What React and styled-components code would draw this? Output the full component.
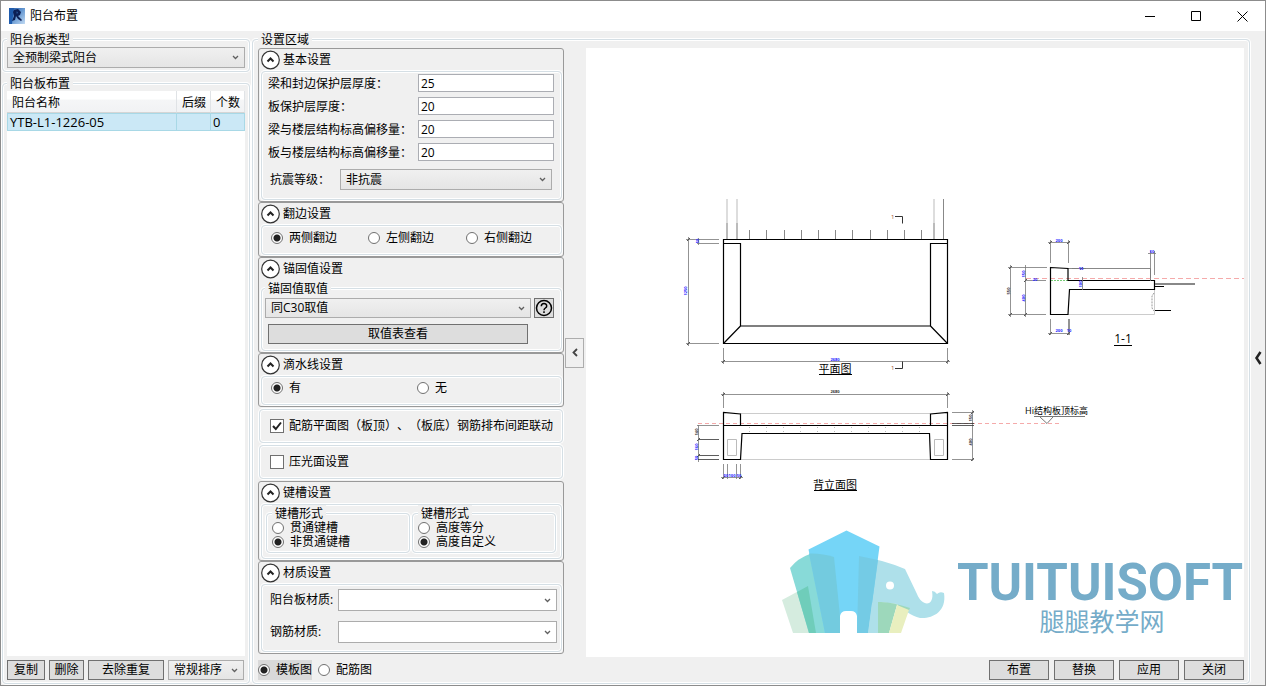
import React, { useState } from "react";

import styled, { createGlobalStyle, css } from "styled-components";

const GlobalStyle = createGlobalStyle`
    * {
        box-sizing: border-box;
    }
    body {
        margin: 0;
        background: #f0f0f0;
        text-spacing-trim: space-all;
    }
    body, button, input, select {
        font-family: "Open Sans", "Noto Sans CJK SC", sans-serif;
        font-size: 12px;
        line-height: 16px;
        color: #000;
    }
`;

const Window = styled.div`
    display: flex;
    flex-direction: column;
    min-height: 100vh;
    border: 1px solid #8c8c8c;
    background: #f0f0f0;
`;

const TitleBar = styled.header`
    display: flex;
    align-items: center;
    height: 30px;
    padding-left: 8px;
    background: #fff;
`;

const Title = styled.h1`
    flex: 1;
    margin: 0 0 0 5px;
    font-size: 12px;
    font-weight: normal;
`;

const WindowButton = styled.button`
    display: flex;
    align-items: center;
    justify-content: center;
    width: 46px;
    height: 30px;
    padding: 0;
    border: 0;
    background: none;
`;

const Body = styled.main`
    flex: 1;
    display: flex;
    padding: 0 0 1px 1px;
`;

const LeftColumn = styled.div`
    display: flex;
    flex-direction: column;
    gap: 3px;
    width: 248px;
    margin-right: 2px;
`;

const Group = styled.fieldset`
    display: flex;
    flex-direction: column;
    min-width: 0;
    margin: 0;
    padding: 0 4px 3px;
    border: 1px solid #d5dfe5;
    border-radius: 4px;
    box-shadow: inset 0 0 0 1px #fff, 0 0 0 1px #fff;
    ${({ $grow }) => $grow && css`flex: 1;`}
`;

const SettingsGroup = styled(Group)`
    flex: 1;
    padding: 0 5px 3px;
`;

const Legend = styled.legend`
    height: 16px;
    margin-left: 0;
    padding: 0 3px;
    background: #f0f0f0;
    line-height: 18px;
`;

const SelectBox = styled.span`
    display: grid;
    align-items: center;
    width: ${({ $width }) => $width || "100%"};
    height: ${({ $height }) => $height || 21}px;
    > * {
        grid-area: 1 / 1;
    }
    > svg {
        justify-self: end;
        margin-right: 5px;
        pointer-events: none;
    }
`;

const Select = styled.select`
    appearance: none;
    width: 100%;
    height: 100%;
    padding: 0 18px 0 5px;
    border: 1px solid #acacac;
    border-radius: 0;
    background: ${({ $plain }) => ($plain ? "#fff" : "linear-gradient(#f0f0f0, #e5e5e5)")};
`;

const Button = styled.button`
    height: 20px;
    padding: 0;
    border: 1px solid #707070;
    background: #ddd;
    line-height: 18px;
    width: ${({ $width }) => $width}px;
`;

const ListArea = styled.div`
    flex: 1;
    margin-bottom: 4px;
    background: #fff;
`;

const Table = styled.table`
    width: 100%;
    table-layout: fixed;
    border-collapse: separate;
    border-spacing: 0;
    th {
        height: 22px;
        padding: 2px 0 0 5px;
        border-right: 1px solid #e0e3e6;
        border-bottom: 1px solid #d5d5d5;
        background: linear-gradient(#fff 40%, #f5f6f7 41%, #f1f2f4);
        font-weight: normal;
        text-align: left;
    }
    td {
        height: 18px;
        padding: 0 0 0 2px;
        border: 1px solid #a8d8e6;
        border-left-width: 0;
        background: #cbe8f6;
        font-size: 13px;
        line-height: 16px;
    }
    td:first-child {
        border-left-width: 1px;
    }
`;

const ListButtons = styled.div`
    display: flex;
    gap: 4px;
`;

const SettingsRow = styled.div`
    flex: 1;
    display: flex;
    align-items: stretch;
    padding-top: 1px;
`;

const Panels = styled.div`
    width: 306px;
`;

const Section = styled.section`
    padding: 0 1px 1px 2px;
    border: 1px solid #999;
    border-radius: 3px;
    ${({ $spaced }) => $spaced && css`margin-top: 2px;`}
`;

const SectionHead = styled.button`
    display: flex;
    align-items: center;
    gap: 3px;
    width: 100%;
    height: 22px;
    padding: 0;
    border: 0;
    background: none;
    text-align: left;
`;

const Inner = styled(Group)`
    padding: ${({ $pad }) => $pad};
`;

const FieldGrid = styled.div`
    display: grid;
    grid-template-columns: 150px 136px;
    row-gap: 5px;
    align-items: center;
    > label {
        height: 18px;
        line-height: 20px;
    }
`;

const TextInput = styled.input`
    width: 100%;
    height: 18px;
    padding: 0 2px;
    border: 1px solid #abadb3;
    border-radius: 0;
    background: #fff;
    line-height: 16px;
`;

const LabelRow = styled.div`
    display: flex;
    align-items: center;
    margin-top: ${({ $top }) => $top || 0}px;
    padding-left: 2px;
    > label {
        width: ${({ $label }) => $label}px;
        line-height: 18px;
    }
`;

const RadioRow = styled.div`
    display: grid;
    grid-template-columns: ${({ $columns }) => $columns};
    align-items: center;
    height: ${({ $height }) => $height}px;
`;

const Choice = styled.label`
    display: flex;
    align-items: center;
    gap: 6px;
    height: ${({ $height }) => $height || 16}px;
    line-height: 14px;
    ${({ $focused }) => $focused && css`background: #d9d9d9;`}
`;

const Radio = styled.input.attrs({ type: "radio" })`
    appearance: none;
    flex: none;
    width: 12px;
    height: 12px;
    margin: 0;
    border: 1px solid #707070;
    border-radius: 50%;
    background: #fff;
    &:checked {
        background: radial-gradient(#212121 3px, #fff 4px);
    }
`;

const CheckBox = styled.input.attrs({ type: "checkbox" })`
    appearance: none;
    grid-area: 1 / 1;
    width: 14px;
    height: 14px;
    margin: 0;
    border: 1px solid #707070;
    background: #fff;
`;

const CheckCell = styled.span`
    display: grid;
    place-items: center;
    > svg {
        grid-area: 1 / 1;
        pointer-events: none;
    }
`;

const CheckGroup = styled(Group)`
    justify-content: center;
    height: 34px;
    margin: 2px 1px 1px 1px;
    padding: 0 0 0 10px;
    white-space: nowrap;
    ${Choice} {
        gap: 5px;
    }
`;

const AnchorRow = styled.div`
    display: flex;
    gap: 3px;
    margin-bottom: 6px;
`;

const HelpButton = styled(Button)`
    display: flex;
    align-items: center;
    justify-content: center;
`;

const TableButton = styled(Button)`
    margin-left: 3px;
`;

const KeyGroups = styled.div`
    display: grid;
    grid-template-columns: 144px 144px;
    gap: 2px;
`;

const KeyGroup = styled(Group)`
    padding: 0 5px 3px;
`;

const Materials = styled.div`
    display: flex;
    flex-direction: column;
    gap: 10px;
`;

const CollapseButton = styled.button`
    display: flex;
    align-items: center;
    justify-content: center;
    align-self: center;
    width: 19px;
    height: 30px;
    margin: 0 2px 0 1px;
    padding: 0;
    border: 1px solid #adadad;
    background: #f0f0f0;
`;

const Canvas = styled.div`
    flex: 1;
    display: flex;
    min-width: 0;
    background: #fff;
    > svg {
        width: 100%;
        height: 100%;
    }
`;

const Footer = styled.div`
    display: flex;
    justify-content: space-between;
    margin-top: 3px;
`;

const FooterItems = styled.div`
    display: flex;
    gap: ${({ $gap }) => $gap}px;
`;

const RightStrip = styled.button`
    display: flex;
    align-items: center;
    justify-content: center;
    width: 15px;
    padding: 0;
    border: 0;
    background: none;
`;

const Chevron = () => (
    <svg width="9" height="9" viewBox="0 0 9 9" fill="none" stroke="#606060" strokeWidth="1.3">
        <path d="M2 3 4.500 5.500 7 3" />
    </svg>
);

const Dropdown = ({ id, label, options, width, height, plain }) => (
    <SelectBox $width={width} $height={height}>
        <Select id={id} aria-label={label} $plain={plain}>
            {options.map((o) => <option key={o}>{o}</option>)}
        </Select>
        <Chevron />
    </SelectBox>
);

const Expander = ({ title, spaced, children }) => {
    const [open, setOpen] = useState(true);

    return (
        <Section $spaced={spaced}>
            <SectionHead type="button" aria-expanded={open} onClick={() => setOpen(!open)}>
                <svg width="19" height="20" viewBox="0 0 19 20">
                    <circle cx="9.5" cy="10" r="8.8" fill="#fff" stroke="#333" strokeWidth="1.2" />
                    <path d="M6.500 11.500 9.500 8.500 12.500 11.500" fill="none" stroke="#222" strokeWidth="2" />
                </svg>
                {title}
            </SectionHead>
            {open && children}
        </Section>
    );
};

const RadioOption = ({ name, label, checked, ...rest }) => (
    <Choice {...rest}>
        <Radio name={name} defaultChecked={checked} />
        {label}
    </Choice>
);

const CheckOption = ({ label, initial }) => {
    const [on, setOn] = useState(initial);

    return (
        <Choice>
            <CheckCell>
                <CheckBox checked={on} onChange={(e) => setOn(e.target.checked)} />
                {on && (
                    <svg width="12" height="12" viewBox="0 0 12 12" fill="none" stroke="#212121" strokeWidth="2">
                        <path d="M2 6 4.8 9 10 2.5" />
                    </svg>
                )}
            </CheckCell>
            {label}
        </Choice>
    );
};

const AppIcon = () => (
    <svg width="16" height="16" viewBox="0 0 16 16">
        <defs>
            <linearGradient id="iconBg" x1="0" y1="0" x2="1" y2="1">
                <stop offset="0" stopColor="#1d4f9c" />
                <stop offset="0.45" stopColor="#5f93cf" />
                <stop offset="1" stopColor="#c3dbf3" />
            </linearGradient>
        </defs>
        <rect width="16" height="16" fill="url(#iconBg)" />
        <path d="M0 0h5L3 16H0z" fill="#1f5cae" />
        <path d="M5 2 9 1 12 4 11 7 9 8 13 12 12 13 9 11 7 8 6 12 3 13 5 8 4 4z" fill="#0c1f55" />
        <path d="M7.500 3.500 9 4 8.500 5.500 7.500 5.500z" fill="#2a5596" />
    </svg>
);

const ticks = [749, 766, 784, 801, 818, 835, 852, 870, 887, 904, 921];

// small dimension figure, optionally turned along a vertical line
const Dim = ({ x, y, turn, dark, children }) => (
    <text
        x={x}
        y={y}
        fontSize="4"
        fontWeight="700"
        textAnchor="middle"
        fill={dark ? "#333" : "#2222ff"}
        transform={turn ? `rotate(-90 ${x} ${y})` : undefined}
    >
        {children}
    </text>
);

const PlanView = () => (
    <g fill="none" stroke="#000">
        <path stroke="#ddd" strokeWidth="2" d="M727 199v24M737 199v24M934 199v24" />
        <path stroke="#bbb" strokeWidth="2" d="M727 223v16M737 223v16M934 223v16" />
        <path stroke="#888" d="M943.500 199v40" />
        <path stroke="#888" d={ticks.map((x) => `M${x + 0.5} 230v9`).join("")} />
        <path strokeWidth="1.2" d="M723.500 239.500H947.500V343.500H723.500z" />
        <path strokeWidth="1.2" d="M723.500 243.500h17v82.500h190v-82.500h17M740.500 326l-17 17.500M930.500 326l17 17.500" />
        <path stroke="#777" strokeWidth="0.8" d="M688.500 237v109M686 239.500h33M686 343.500h33M698.500 238v7M697 243.500h22M721 361.500h229M723.500 348v16M947.500 348v16" />
        <path stroke="#333" d="M895 216.500h7.500v7M895 368.500h7.500v-7" />
        <path strokeWidth="1" d="M687 241l3-3M687 345l3-3M722 363l3-3M946 363l3-3" stroke="#555" />
        <path d="M819 374.500h33" />
        <g stroke="none">
            <Dim x={687} y={291} turn>1250</Dim>
            <Dim x={699} y={241} turn>50</Dim>
            <Dim x={835} y={361}>2680</Dim>
            <text x="891" y="219" fontSize="6" fill="#a0522d">1</text>
            <text x="891" y="370" fontSize="6" fill="#a0522d">1</text>
            <text x="835" y="373" fontSize="11" textAnchor="middle" fill="#000">平面图</text>
        </g>
    </g>
);

const RearView = () => (
    <g fill="none" stroke="#000">
        <path stroke="#ccc" d="M740 413.500h190M741 459.500h189" />
        <path stroke="#f5aaaa" strokeDasharray="4 3" d="M698 423.500h361" />
        <path stroke="#bbb" strokeDasharray="1 16" d="M749 427.500h175M749 431.500h175" />
        <path strokeWidth="1.2" d="M723.500 459.500V412.500L740.500 414V425.500H930.500V414L947.500 412.500V459.500H930.500L929.500 433.500H742L740.500 459.500z" />
        <path strokeWidth="1.2" d="M723.500 425.500h224" />
        <path stroke="#bbb" d="M727.500 439.500h9v16h-9zM934.500 439.500h9v16h-9z" />
        <path stroke="#777" strokeWidth="0.8" d="M721 394.500h229M723.500 392v16M947.500 392v16M698.500 425v37M723.500 464v15M727.500 464v15M736.500 464v15M740.500 464v15M721 477.500h22M972.500 410v51M952 412.500h22M952 459.500h22M697 425.500h22" />
        <path stroke="#333" strokeWidth="0.8" d="M698 439.500h21M698 455.500h21M698 459.500h21M952 423.500h22M952 425.500h22" />
        <path stroke="#555" d="M722 396l3-3M946 396l3-3M697 441l3-3M697 457l3-3M971 414l3-3M971 461l3-3M722 479l3-3M739 479l3-3" />
        <path d="M814 490.500h43" />
        <g stroke="none">
            <Dim x={835} y={393} dark>2680</Dim>
            <Dim x={698} y={432} turn dark>140</Dim>
            <Dim x={698} y={447} turn>160</Dim>
            <Dim x={698} y={458} turn>50</Dim>
            <Dim x={726} y={477}>50</Dim>
            <Dim x={732} y={477}>100</Dim>
            <Dim x={739} y={477}>50</Dim>
            <Dim x={972} y={418} turn dark>150</Dim>
            <Dim x={972} y={442} turn dark>400</Dim>
            <text x="835" y="489" fontSize="11" textAnchor="middle" fill="#000">背立面图</text>
        </g>
    </g>
);

const SectionView = () => (
    <g fill="none" stroke="#000">
        <path stroke="#888" d="M1068 268.500h82.500v12" />
        <path stroke="#ccc" d="M1068 314.500h86.500v-25" />
        <path stroke="#f5aaaa" strokeDasharray="5 3" d="M1026 278.500h218" />
        <path stroke="#7c7" strokeDasharray="2 1" d="M1051 280.500h17" />
        <path strokeWidth="1.2" d="M1050.500 267.500L1068 268.500V280.500H1154.500V289.500H1069.500L1068 314.500H1050.500z" />
        <path stroke="#888" strokeWidth="2" d="M1155 284h40" />
        <path d="M1155 286.500h9M1155 310.500h16" />
        <path stroke="#999" strokeDasharray="2 1" d="M1154 293l-2 3v12l2 3" />
        <path
            stroke="#777"
            strokeWidth="0.8"
            d="M1010.500 265v52M1008 267.500h39M1008 314.500h38M1025.500 265v52M1026 280.500h20M1048 242.500h22M1050.500 240v23M1068.500 240v23M1048 333.500h22M1050.500 319v16M1068.500 319v16M1069.500 319v16M1150.500 251v30M1154.500 251v24M1148 253.500h8M1072 268.500h14M1082.500 277v13"
        />
        <path stroke="#555" d="M1009 269l3-3M1009 316l3-3M1024 282l3-3M1024 316l3-3M1049 244l3-3M1067 244l3-3M1049 335l3-3M1067 335l3-3M1080 269.500l3-2" />
        <path d="M1114 345.500h18" />
        <path stroke="#777" d="M1034 416.500h51M1040 417l7 6.500 6-6.500" />
        <g stroke="none">
            <Dim x={1059} y={242}>200</Dim>
            <Dim x={1059} y={332}>200</Dim>
            <Dim x={1069} y={332}>10</Dim>
            <Dim x={1152} y={253}>50</Dim>
            <Dim x={1081} y={270}>10</Dim>
            <Dim x={1035} y={281}>20</Dim>
            <Dim x={1010} y={291} turn dark>550</Dim>
            <Dim x={1025} y={274} turn>150</Dim>
            <Dim x={1025} y={298} turn>400</Dim>
            <Dim x={1082} y={284} turn>100</Dim>
            <text x="1123" y="343" fontSize="12" textAnchor="middle" fill="#000">1-1</text>
            <text x="1025" y="414" fontSize="9" fill="#000">Hi结构板顶标高</text>
        </g>
    </g>
);

const Brand = () => (
    <g>
        <path fill="#d5ecdf" d="M782 600 808 586 816 633H793z" />
        <path fill="#88dad8" d="M790 568Q798 558 810 554 822 553 834 557L840 615V633H809z" />
        <path fill="#6fcdba" d="M797 592 808 586 816 633H809z" />
        <path fill="#aee0ea" d="M859 556Q884 560 905 569L917 594C922 607 935 607 932 591Q935 591 937 594 940 591 944 593C947 612 932 619 920 618 911 616 904 610 897 604L878 602V633H857z" />
        <path fill="#75d5f7" d="M808.500 549.500 846.500 530.500 879.500 546.500 868 633H857V616Q856 611 851 611H846Q841 611 840 616V633H825z" />
        <path fill="#73cbdf" d="M809 553.500Q822 553 834 557L840 616V633H825z" />
        <path fill="#74cbe5" d="M859 556 878 560 868 633H857z" />
        <path fill="#aee0ea" d="M872 603 878.500 602V633H868z" />
        <path fill="#9dd8bb" d="M878 602Q890 601 910 608L908 612 897 605 889 633H878z" />
        <path fill="#e9efbf" d="M897 605 909 610 901 633H889z" />
        <circle cx="890" cy="585.500" r="4" fill="#fff" />
        <g fill="#75acc9" textAnchor="middle">
            <text x="1100" y="600" fontFamily="Roboto, sans-serif" fontSize="51" fontWeight="700">TUITUISOFT</text>
            <text x="1102" y="631" fontSize="25">腿腿教学网</text>
        </g>
    </g>
);

const Drawing = () => (
    <svg viewBox="586 48 658 609" role="img" aria-label="模板图">
        <PlanView />
        <RearView />
        <SectionView />
        <Brand />
    </svg>
);

const fields = [
    ["梁和封边保护层厚度：", "25"],
    ["板保护层厚度：", "20"],
    ["梁与楼层结构标高偏移量：", "20"],
    ["板与楼层结构标高偏移量：", "20"],
];

const Sidebar = () => (
    <LeftColumn>
        <Group>
            <Legend>阳台板类型</Legend>
            <Dropdown label="阳台板类型" options={["全预制梁式阳台"]} />
        </Group>
        <Group $grow>
            <Legend>阳台板布置</Legend>
            <ListArea>
                <Table>
                    <colgroup>
                        <col />
                        <col width="34" />
                        <col width="34" />
                    </colgroup>
                    <thead>
                        <tr>
                            <th>阳台名称</th>
                            <th>后缀</th>
                            <th>个数</th>
                        </tr>
                    </thead>
                    <tbody>
                        <tr>
                            <td>YTB-L1-1226-05</td>
                            <td></td>
                            <td>0</td>
                        </tr>
                    </tbody>
                </Table>
            </ListArea>
            <ListButtons>
                <Button $width={38}>复制</Button>
                <Button $width={35}>删除</Button>
                <Button $width={76}>去除重复</Button>
                <Dropdown label="排序" options={["常规排序"]} width="76px" height={20} />
            </ListButtons>
        </Group>
    </LeftColumn>
);

const App = () => (
    <>
        <GlobalStyle />
        <Window>
            <TitleBar>
                <AppIcon />
                <Title>阳台布置</Title>
                <WindowButton aria-label="最小化">
                    <svg width="10" height="10"><path d="M0 5.500h10" stroke="#000" /></svg>
                </WindowButton>
                <WindowButton aria-label="最大化">
                    <svg width="10" height="10"><path d="M.5 .5h9v9h-9z" fill="none" stroke="#000" /></svg>
                </WindowButton>
                <WindowButton aria-label="关闭窗口">
                    <svg width="11" height="11"><path d="M.5 .5l10 10M10.500 .5l-10 10" stroke="#000" /></svg>
                </WindowButton>
            </TitleBar>
            <Body>
                <Sidebar />
                <SettingsGroup>
                    <Legend>设置区域</Legend>
                    <SettingsRow>
                        <Panels>
                            <Expander title="基本设置">
                                <Inner $pad="2px 6px 9px">
                                    <FieldGrid>
                                        {fields.map(([label, value], i) => (
                                            <React.Fragment key={label}>
                                                <label htmlFor={`field${i}`}>{label}</label>
                                                <TextInput id={`field${i}`} defaultValue={value} />
                                            </React.Fragment>
                                        ))}
                                    </FieldGrid>
                                    <LabelRow $label={70} $top={8}>
                                        <label htmlFor="seismic">抗震等级：</label>
                                        <Dropdown id="seismic" options={["非抗震"]} width="212px" />
                                    </LabelRow>
                                </Inner>
                            </Expander>
                            <Expander title="翻边设置">
                                <Inner $pad="0 9px 4px">
                                    <RadioRow $columns="97px 98px 1fr" $height={24}>
                                        <RadioOption name="flange" label="两侧翻边" checked />
                                        <RadioOption name="flange" label="左侧翻边" />
                                        <RadioOption name="flange" label="右侧翻边" />
                                    </RadioRow>
                                </Inner>
                            </Expander>
                            <Expander title="锚固值设置">
                                <Inner $pad="2px 3px 6px">
                                    <Legend>锚固值取值</Legend>
                                    <AnchorRow>
                                        <Dropdown label="锚固值取值" options={["同C30取值"]} width="266px" height={20} />
                                        <HelpButton $width={20} aria-label="帮助">
                                            <svg width="18" height="18" viewBox="0 0 18 18" fill="none" stroke="#000" strokeWidth="1.5">
                                                <circle cx="9" cy="9" r="7.500" />
                                                <path d="M6.300 7.300C6.300 3.600 11.700 3.700 11.700 7 11.700 9.200 9 8.800 9 11.200M9 12.300v1.700" />
                                            </svg>
                                        </HelpButton>
                                    </AnchorRow>
                                    <TableButton $width={260}>取值表查看</TableButton>
                                </Inner>
                            </Expander>
                            <Expander title="滴水线设置">
                                <Inner $pad="0 9px 5px">
                                    <RadioRow $columns="146px 1fr" $height={22}>
                                        <RadioOption name="drip" label="有" checked />
                                        <RadioOption name="drip" label="无" />
                                    </RadioRow>
                                </Inner>
                            </Expander>
                            <CheckGroup>
                                <CheckOption label="配筋平面图（板顶）、（板底）钢筋排布间距联动" initial />
                            </CheckGroup>
                            <CheckGroup>
                                <CheckOption label="压光面设置" initial={false} />
                            </CheckGroup>
                            <Expander title="键槽设置" spaced>
                                <Inner $pad="0 4px 5px">
                                    <KeyGroups>
                                        <KeyGroup>
                                            <Legend>键槽形式</Legend>
                                            <RadioOption name="keyShape" label="贯通键槽" $height={14} />
                                            <RadioOption name="keyShape" label="非贯通键槽" checked $height={14} />
                                        </KeyGroup>
                                        <KeyGroup>
                                            <Legend>键槽形式</Legend>
                                            <RadioOption name="keyHeight" label="高度等分" $height={14} />
                                            <RadioOption name="keyHeight" label="高度自定义" checked $height={14} />
                                        </KeyGroup>
                                    </KeyGroups>
                                </Inner>
                            </Expander>
                            <Expander title="材质设置">
                                <Inner $pad="4px 3px 8px 6px">
                                    <Materials>
                                        <LabelRow $label={68}>
                                            <label htmlFor="slab">阳台板材质:</label>
                                            <Dropdown id="slab" options={[""]} width="219px" height={22} plain />
                                        </LabelRow>
                                        <LabelRow $label={68}>
                                            <label htmlFor="rebar">钢筋材质:</label>
                                            <Dropdown id="rebar" options={[""]} width="219px" height={22} plain />
                                        </LabelRow>
                                    </Materials>
                                </Inner>
                            </Expander>
                        </Panels>
                        <CollapseButton aria-label="收起设置">
                            <svg width="8" height="9" viewBox="0 0 8 9"><path d="M6 1 2.500 4.500 6 8" fill="none" stroke="#444" strokeWidth="1.800" /></svg>
                        </CollapseButton>
                        <Canvas>
                            <Drawing />
                        </Canvas>
                    </SettingsRow>
                    <Footer>
                        <FooterItems $gap={6}>
                            <RadioOption name="view" label="模板图" checked $height={20} $focused />
                            <RadioOption name="view" label="配筋图" $height={20} />
                        </FooterItems>
                        <FooterItems $gap={5}>
                            <Button $width={60}>布置</Button>
                            <Button $width={60}>替换</Button>
                            <Button $width={60}>应用</Button>
                            <Button $width={60}>关闭</Button>
                        </FooterItems>
                    </Footer>
                </SettingsGroup>
                <RightStrip aria-label="展开">
                    <svg width="8" height="14" viewBox="0 0 8 14"><path d="M6.500 1 2.500 7l4 6" fill="none" stroke="#222" strokeWidth="2.500" /></svg>
                </RightStrip>
            </Body>
        </Window>
    </>
);

export default App;
